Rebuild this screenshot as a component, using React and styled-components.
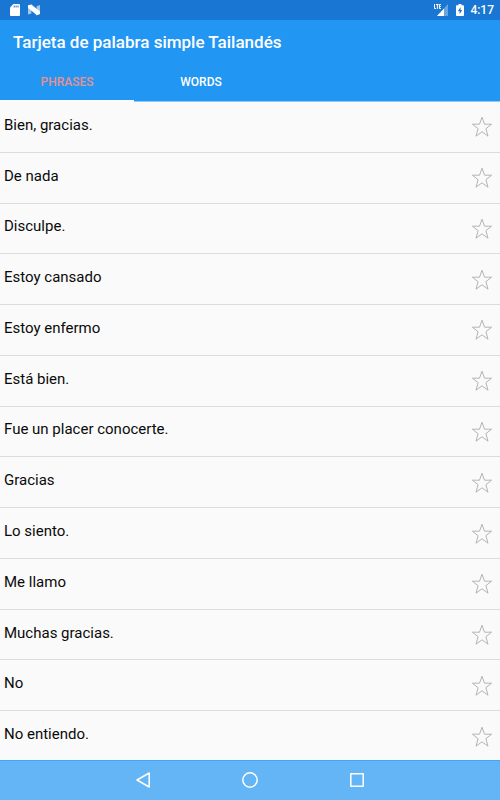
import React, { useState } from "react";
import styled, { createGlobalStyle } from "styled-components";

const phrases = [
  "Bien, gracias.",
  "De nada",
  "Disculpe.",
  "Estoy cansado",
  "Estoy enfermo",
  "Está bien.",
  "Fue un placer conocerte.",
  "Gracias",
  "Lo siento.",
  "Me llamo",
  "Muchas gracias.",
  "No",
  "No entiendo.",
];

const tabs = ["Phrases", "Words"];

export default function App() {
  const [activeTab, setActiveTab] = useState("Phrases");
  const [favorites, setFavorites] = useState([]);

  const toggleFavorite = (phrase) => {
    setFavorites((prev) =>
      prev.includes(phrase) ? prev.filter((p) => p !== phrase) : [...prev, phrase]
    );
  };

  return (
    <>
      <GlobalStyle />
      <Screen>
        <StatusBar>
          <StatusGroup>
            <SdCardIcon />
            <NougatIcon />
          </StatusGroup>
          <StatusGroup>
            <SignalIcon />
            <BatteryIcon />
            <Clock>4:17</Clock>
          </StatusGroup>
        </StatusBar>
        <Header>
          <Title>Tarjeta de palabra simple Tailandés</Title>
          <Tabs role="tablist">
            {tabs.map((tab) => (
              <Tab
                key={tab}
                role="tab"
                aria-selected={tab === activeTab}
                $active={tab === activeTab}
                onClick={() => setActiveTab(tab)}
              >
                {tab}
              </Tab>
            ))}
          </Tabs>
        </Header>
        <PhraseList>
          {phrases.map((phrase) => (
            <PhraseRow key={phrase}>
              <PhraseText>{phrase}</PhraseText>
              <StarButton
                aria-label={`Favorito: ${phrase}`}
                aria-pressed={favorites.includes(phrase)}
                onClick={() => toggleFavorite(phrase)}
              >
                <StarIcon filled={favorites.includes(phrase)} />
              </StarButton>
            </PhraseRow>
          ))}
        </PhraseList>
        <NavBar>
          <NavButton aria-label="Back">
            <svg width="20" height="20" viewBox="0 0 20 20">
              <path d="M16.2 3v14L4 10z" />
            </svg>
          </NavButton>
          <NavButton aria-label="Home">
            <svg width="20" height="20" viewBox="0 0 20 20">
              <circle cx="10" cy="10" r="7.2" />
            </svg>
          </NavButton>
          <NavButton aria-label="Recent apps">
            <svg width="20" height="20" viewBox="0 0 20 20">
              <rect x="3.8" y="3.8" width="12.4" height="12.4" />
            </svg>
          </NavButton>
        </NavBar>
      </Screen>
    </>
  );
}

function SdCardIcon() {
  return (
    <svg width="10" height="12" viewBox="0 0 10 12">
      <path d="M3.4 0H9a1 1 0 0 1 1 1v10a1 1 0 0 1-1 1H1a1 1 0 0 1-1-1V3.4z" fill="#fff" />
      <path d="M3.7 1.4h1v2h-1zM5.6 1.4h1v2h-1zM7.5 1.4h1v2h-1z" fill="#1976d2" />
    </svg>
  );
}

function NougatIcon() {
  return (
    <svg width="12" height="12" viewBox="0 0 12 12">
      <path d="M0 1.6L3.4.8v8.6L0 10.6zM8.6 2.2L12 1v8.8l-3.4 1.4z" fill="#fff" opacity="0.6" />
      <path d="M0 1.2L3.4.6 12 7.6v2.4l-3.2 1.2L0 3.8z" fill="#fff" />
    </svg>
  );
}

function SignalIcon() {
  return (
    <svg width="14" height="12" viewBox="0 0 14 12">
      <path d="M14 0v12H3z" fill="#fff" opacity="0.35" />
      <path d="M10 4.4V12H3z" fill="#fff" />
      <path d="M.5 0v4.5H2M2 .5h2.6M3.3.5V5M7 .5H5.4v4H7M5.4 2.5h1.5" fill="none" stroke="#fff" />
    </svg>
  );
}

function BatteryIcon() {
  return (
    <svg width="8" height="12" viewBox="0 0 8 12">
      <path d="M2.5 0h3v1.2H7.2a.8.8 0 0 1 .8.8v9.2a.8.8 0 0 1-.8.8H.8a.8.8 0 0 1-.8-.8V2a.8.8 0 0 1 .8-.8h1.7z" fill="#fff" />
      <path d="M4.6 3L1.9 7.2h1.7v3l2.6-4.3H4.6z" fill="#1976d2" />
    </svg>
  );
}

function StarIcon({ filled }) {
  return (
    <svg width="22" height="22" viewBox="0 0 22 22">
      <path
        d="M11 1.2l2.5 7h7.1l-5.7 4.5 2.1 7.5-6-4.4-6 4.4 2.1-7.5-5.7-4.5h7.1z"
        fill={filled ? "#b4b4b4" : "none"}
        stroke="#b4b4b4"
      />
    </svg>
  );
}

const GlobalStyle = createGlobalStyle`
  * {
    box-sizing: border-box;
  }

  body {
    margin: 0;
    font-family: Roboto, "Liberation Sans", sans-serif;
    background-color: #fafafa;
  }

  button {
    font-family: inherit;
    border: none;
    padding: 0;
    background: none;
    cursor: pointer;
  }

  svg {
    display: block;
  }
`;

const Screen = styled.div`
  display: flex;
  flex-direction: column;
  min-height: 100vh;
`;

const StatusBar = styled.div`
  display: flex;
  justify-content: space-between;
  align-items: center;
  height: 20px;
  padding: 0 6px 0 10px;
  background-color: #1976d2;
`;

const StatusGroup = styled.div`
  display: flex;
  align-items: center;
  gap: 8px;
`;

const Clock = styled.span`
  margin-left: -2px;
  color: white;
  font-size: 12px;
  font-weight: 500;
  line-height: 20px;
`;

const Header = styled.header`
  background-color: #2196f3;
`;

const Title = styled.h1`
  margin: 0;
  padding: 0 13px;
  color: white;
  font-size: 17px;
  font-weight: 500;
  line-height: 44px;
`;

const Tabs = styled.div`
  display: flex;
  box-shadow: inset 0 -1px #90caf9;
`;

const Tab = styled.button`
  width: 134px;
  height: 38px;
  border-bottom: 2px solid ${(props) => (props.$active ? "#fafafa" : "transparent")};
  color: ${(props) => (props.$active ? "#e69191" : "white")};
  font-size: 12px;
  font-weight: 500;
  text-transform: uppercase;
`;

/* the last row runs slightly under the navigation bar */
const PhraseList = styled.ul`
  display: flex;
  flex: 1;
  flex-direction: column;
  margin: 0 0 -2px;
  padding: 0;
  list-style: none;
`;

const PhraseRow = styled.li`
  display: flex;
  flex: 1;
  align-items: center;
  justify-content: space-between;
  padding: 0 7px 0 4px;
  border-bottom: 1px solid #dcdcdc;
`;

const PhraseText = styled.span`
  padding-bottom: 4px;
  color: #0a0a0a;
  font-size: 15px;
  line-height: 20px;
`;

const StarButton = styled.button`
  padding-top: 1px;
`;

const NavBar = styled.nav`
  position: relative;
  display: flex;
  justify-content: center;
  align-items: center;
  gap: 87px;
  height: 40px;
  background-color: #64b5f6;
  box-shadow: inset 0 1px #42a5f5;
`;

const NavButton = styled.button`
  svg {
    fill: none;
    stroke: white;
    stroke-width: 1.5;
    stroke-linejoin: round;
  }
`;
